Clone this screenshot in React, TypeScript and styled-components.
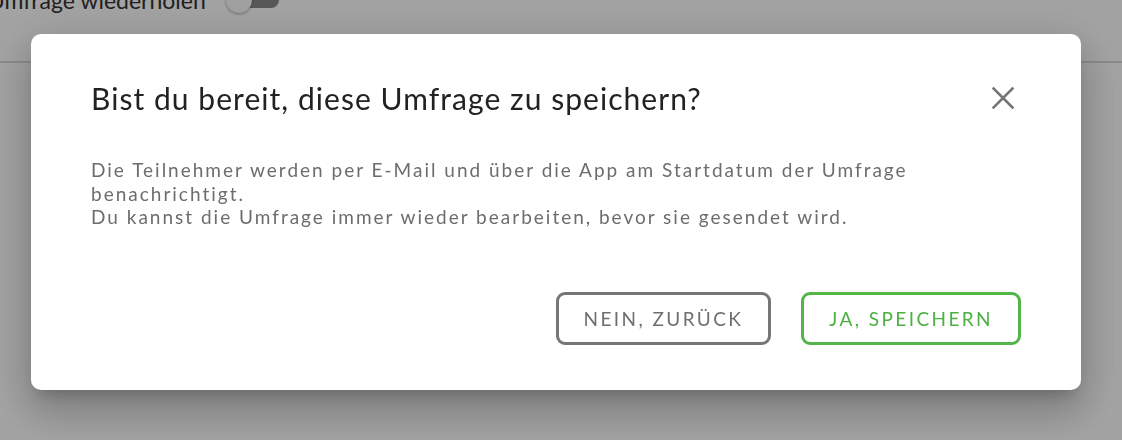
import React from 'react';
import styled, { createGlobalStyle } from 'styled-components';

const GlobalStyle = createGlobalStyle`
  html, body {
    margin: 0;
    padding: 0;
    background: #ffffff;
    font-family: Lato, "Noto Sans", sans-serif;
    overflow: hidden;
  }
`;

const Page = styled.div`
  width: 1122px;
  height: 440px;
  background: #ffffff;
`;

const SettingRow = styled.div`
  display: flex;
  align-items: center;
  gap: 20px;
  height: 40px;
  margin-top: -20px;
`;

const SettingLabel = styled.span`
  margin-left: -12px;
  font-size: 23px;
  color: #333333;
`;

const Divider = styled.hr`
  margin: 41px 0 0;
  border: none;
  height: 2px;
  background: #dadada;
`;

const Switch = styled.span`
  position: relative;
  display: inline-block;
  width: 53px;
  height: 20px;
`;

const SwitchTrack = styled.span`
  position: absolute;
  left: 14px;
  right: 0;
  top: 2px;
  height: 16px;
  border-radius: 8px;
  background: #8a8a8a;
`;

const SwitchThumb = styled.span`
  position: absolute;
  left: 0;
  top: -3px;
  width: 26px;
  height: 26px;
  border-radius: 50%;
  background: #fafafa;
  box-shadow: 0 1px 3px rgba(0, 0, 0, 0.35);
`;

const Overlay = styled.div`
  position: fixed;
  inset: 0;
  display: flex;
  align-items: flex-start;
  padding: 34px 41px 0 31px;
  background: rgba(0, 0, 0, 0.36);
`;

const Dialog = styled.div`
  box-sizing: border-box;
  width: 1050px;
  height: 356px;
  padding: 44px 60px 45px;
  background: #ffffff;
  border-radius: 10px;
  display: flex;
  flex-direction: column;
  box-shadow: 0 11px 15px -7px rgba(0, 0, 0, 0.2), 0 24px 38px 3px rgba(0, 0, 0, 0.14),
    0 9px 46px 8px rgba(0, 0, 0, 0.12);
`;

const Header = styled.div`
  display: flex;
  align-items: center;
  justify-content: space-between;
`;

const Title = styled.h2`
  margin: 0;
  font-size: 30px;
  font-weight: 400;
  line-height: 38px;
  color: #222222;
  letter-spacing: 1.05px;
`;

const CloseButton = styled.button`
  display: flex;
  align-items: center;
  justify-content: center;
  width: 40px;
  height: 40px;
  margin-right: -2px;
  padding: 0;
  border: none;
  background: transparent;
  cursor: pointer;
`;

const Body = styled.p`
  margin: 40px 0 0;
  font-size: 19px;
  line-height: 23.5px;
  color: #6d6d6d;
  letter-spacing: 2px;
`;

const Actions = styled.div`
  margin-top: auto;
  display: flex;
  justify-content: flex-end;
  gap: 30px;
`;

const Button = styled.button<{ $tone: 'neutral' | 'primary' }>`
  box-sizing: border-box;
  height: 53px;
  padding: 0 25px;
  border-radius: 9px;
  border: 3px solid ${({ $tone }) => ($tone === 'primary' ? '#52b548' : '#767676')};
  color: ${({ $tone }) => ($tone === 'primary' ? '#4cb043' : '#6f6f6f')};
  background: #ffffff;
  font-family: Lato, "Noto Sans", sans-serif;
  font-size: 19px;
  letter-spacing: 2.4px;
  text-transform: uppercase;
  cursor: pointer;
`;

const CloseIcon = () => (
  <svg width="22" height="22" viewBox="0 0 22 22">
    <path d="M1.5 1.5 L20.5 20.5 M20.5 1.5 L1.5 20.5" stroke="#757575" strokeWidth="2.6" strokeLinecap="square" />
  </svg>
);

export default function App() {
  return (
    <>
      <GlobalStyle />
      <Page>
        <SettingRow>
          <SettingLabel>Umfrage wiederholen</SettingLabel>
          <Switch>
            <SwitchTrack />
            <SwitchThumb />
          </Switch>
        </SettingRow>
        <Divider />
      </Page>
      <Overlay>
        <Dialog role="dialog">
          <Header>
            <Title>Bist du bereit, diese Umfrage zu speichern?</Title>
            <CloseButton aria-label="Schließen">
              <CloseIcon />
            </CloseButton>
          </Header>
          <Body>
            Die Teilnehmer werden per E-Mail und über die App am Startdatum der Umfrage
            <br />
            benachrichtigt.
            <br />
            Du kannst die Umfrage immer wieder bearbeiten, bevor sie gesendet wird.
          </Body>
          <Actions>
            <Button $tone="neutral">Nein, zurück</Button>
            <Button $tone="primary">Ja, speichern</Button>
          </Actions>
        </Dialog>
      </Overlay>
    </>
  );
}
